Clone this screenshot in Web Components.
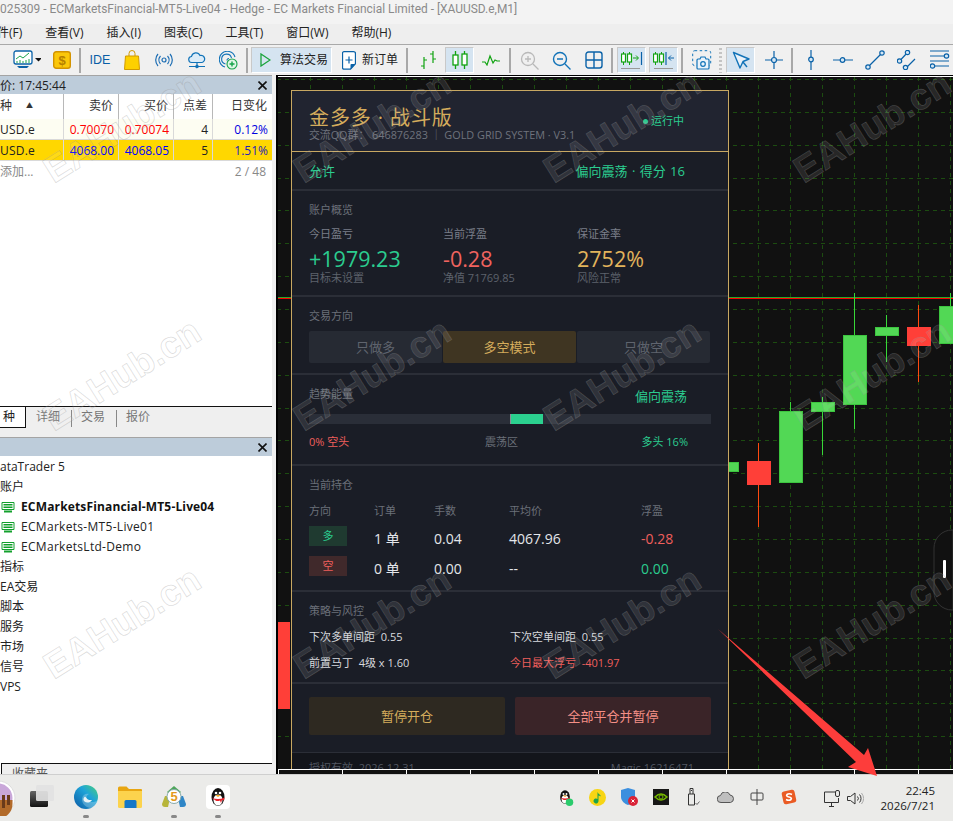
<!DOCTYPE html>
<html lang="zh">
<head>
<meta charset="utf-8">
<title>MT5</title>
<style>
  html, body { margin: 0; padding: 0; height: 100%; overflow: hidden; background: #f0f0f0; }
  body { font: 12px/16px "Open Sans", "Noto Sans CJK SC", sans-serif; color: #222; }
  svg { display: block; }
</style>
</head>
<body>
<mt-app>
  <mt-titlebar slot="top">025309 - ECMarketsFinancial-MT5-Live04 - Hedge - EC Markets Financial Limited - [XAUUSD.e,M1]</mt-titlebar>
  <mt-menubar slot="top"></mt-menubar>
  <mt-toolbar slot="top">
    <tool-item w="46"><svg width="36" height="22" viewBox="0 0 36 22"><rect x="9" y="2" width="18" height="13" rx="2" fill="#fff" stroke="#0a62a8" stroke-width="1.3"/><path d="M11 10l4-3 3 2 6-5" fill="none" stroke="#19a34a"/><path d="M12 14v-2M15 14v-3M18 14v-2M21 14v-3M24 14v-4" stroke="#19a34a"/><path d="M12 17h12l-2 2h-8z" fill="#0a62a8"/><path d="M30 9h7l-3.500 3.500z" fill="#111"/></svg></tool-item>
    <tool-item w="32"><svg width="18" height="18" viewBox="0 0 18 18"><rect x=".7" y=".7" width="16.600" height="16.600" rx="2.500" fill="#fbc70a" stroke="#d39300" stroke-width="1.400"/><text x="9" y="14" text-anchor="middle" font-family="Liberation Sans" font-weight="700" font-size="13" fill="#b67f00">$</text></svg></tool-item>
    <tool-sep></tool-sep>
    <tool-item w="36" style="color:#0a5ea6;font-size:12.500px;font-family:'Liberation Sans'">IDE</tool-item>
    <tool-item w="28"><svg width="16" height="20" viewBox="0 0 16 20"><path d="M5 7V3.500a3 3 0 016 0V7" fill="none" stroke="#d19a00"/><path d="M1.500 6h13l1 13.500H.5z" fill="#fdd000" stroke="#d19a00"/></svg></tool-item>
    <tool-item w="36"><svg width="18" height="14" viewBox="0 0 18 14" fill="none" stroke="#1c6db3" stroke-width="1.200"><circle cx="9" cy="7" r="2"/><path d="M5.500 3a6 6 0 000 8M12.500 3a6 6 0 010 8M3 1a9 9 0 000 12M15 1a9 9 0 010 12"/></svg></tool-item>
    <tool-item w="30"><svg width="18" height="17" viewBox="0 0 18 17" fill="none" stroke="#1273b8" stroke-width="1.200"><path d="M4 10.500a3 3 0 01-.5-6 4.500 4.500 0 018.500-1 3.500 3.500 0 012 7z" fill="#dcecf8"/><path d="M9 10.500v4M1 14.500h16"/><circle cx="9" cy="14.500" r="1.200" fill="#1273b8"/></svg></tool-item>
    <tool-item w="33"><svg width="19" height="19" viewBox="0 0 19 19" fill="none" stroke="#1273b8" stroke-width="1.100"><path d="M6 16A8 8 0 1116 6"/><path d="M6.500 13a5 5 0 116-6"/><path d="M8 9.500a2 2 0 012-2"/><circle cx="13" cy="13" r="5" fill="#dff6e6" stroke="#16a34a"/><path d="M13 10.500v5M10.500 13h5" stroke="#16a34a" stroke-width="1.400"/></svg></tool-item>
    <tool-sep style="margin-right:3px"></tool-sep>
    <tool-item w="81" active style="font-size:12px;justify-content:flex-start;padding-left:8px;gap:9px"><svg width="11" height="14" viewBox="0 0 11 14"><path d="M1 1l9 6-9 6z" fill="none" stroke="#1aa33b" stroke-width="1.300"/></svg><span>算法交易</span></tool-item>
    <tool-item w="73" style="font-size:12px;gap:6px;justify-content:flex-start;padding-left:10px"><svg width="14" height="19" viewBox="0 0 14 19"><path d="M2 .7h9.500a2 2 0 012 2v10l-5 5.500H2a1.500 1.500 0 01-1.500-1.500V2.200A1.500 1.500 0 012 .7z" fill="#fff" stroke="#0a62a8" stroke-width="1.300"/><path d="M7 5.500v7M3.500 9h7" stroke="#0a62a8" stroke-width="1.200"/><path d="M8.500 18.500l5-5.500H9.500a1 1 0 00-1 1z" fill="#0a62a8"/></svg><span>新订单</span></tool-item>
    <tool-sep></tool-sep>
    <tool-item w="32" style="margin-left:3px"><svg width="17" height="20" viewBox="0 0 17 20" fill="none" stroke="#11a311" stroke-width="1.200"><path d="M4 7v12M1 16h3M4 10h3M13 1v12M10 4h3M13 9h3"/></svg></tool-item>
    <tool-item w="29" style="margin-left:1px" active><svg width="16" height="20" viewBox="0 0 16 20" fill="none" stroke="#11a311" stroke-width="1.300"><path d="M3.500 1v18M12.500 1v18"/><rect x="1" y="5" width="5" height="10" fill="#fff"/><rect x="10" y="4" width="5" height="11" fill="#fff"/></svg></tool-item>
    <tool-item w="33"><svg width="18" height="12" viewBox="0 0 18 12" fill="none" stroke="#11a311" stroke-width="1.200"><path d="M0 8h3l2 3 3-9 3 7 2-3 2 1h3"/></svg></tool-item>
    <tool-sep style="margin-left:2px"></tool-sep>
    <tool-item w="32" style="margin-left:1px"><svg width="19" height="19" viewBox="0 0 19 19" fill="none" stroke="#b9b9b9" stroke-width="1.300"><circle cx="8" cy="8" r="6.500"/><path d="M8 5v6M5 8h6M13 13l5.500 5.500"/></svg></tool-item>
    <tool-item w="33"><svg width="19" height="19" viewBox="0 0 19 19" fill="none" stroke="#1273b8" stroke-width="1.400"><circle cx="8" cy="8" r="6.500"/><path d="M5 8h6M13 13l5.500 5.500"/></svg></tool-item>
    <tool-item w="32"><svg width="18" height="18" viewBox="0 0 18 18" fill="none" stroke="#0a62a8" stroke-width="1.400"><rect x="1" y="1" width="16" height="16" rx="2.500"/><path d="M9 1v16M1 9h16"/></svg></tool-item>
    <tool-sep style="margin-right:4px"></tool-sep>
    <tool-item w="29" active><svg width="22" height="20" viewBox="0 0 22 20" fill="none"><path d="M2.500 2v13M8.500 2v13" stroke="#11a311"/><rect x=".5" y="4" width="4" height="8" fill="#fff" stroke="#11a311" stroke-width="1.200"/><rect x="6.500" y="4" width="4" height="8" fill="#fff" stroke="#11a311" stroke-width="1.200"/><path d="M12 8h5M15 5.500L17.500 8 15 10.500" stroke="#11a311"/><path d="M20.500 2v13" stroke="#0a62a8" stroke-width="1.200"/><path d="M0 18.500h19" stroke="#999"/></svg></tool-item>
    <tool-item w="29" style="margin-left:3px" active><svg width="22" height="20" viewBox="0 0 22 20" fill="none"><path d="M2.500 2v13M8.500 2v13" stroke="#11a311"/><rect x=".5" y="4" width="4" height="8" fill="#fff" stroke="#11a311" stroke-width="1.200"/><rect x="6.500" y="4" width="4" height="8" fill="#fff" stroke="#11a311" stroke-width="1.200"/><path d="M13 2v13" stroke="#0a62a8" stroke-width="1.200"/><path d="M15.500 8H21M18 5.500L15.500 8 18 10.500" stroke="#0a62a8"/><path d="M1 18.500h19" stroke="#999"/></svg></tool-item>
    <tool-sep style="margin-left:3px"></tool-sep>
    <tool-item w="32" style="margin-left:2px"><svg width="20" height="20" viewBox="0 0 20 20" fill="none"><rect x=".7" y=".7" width="18" height="15" rx="2" stroke="#1273b8" stroke-dasharray="2.500 2.500"/><path d="M6 9h2l1-2h4l1 2h2a1 1 0 011 1v8a1 1 0 01-1 1H6a1 1 0 01-1-1v-8a1 1 0 011-1z" fill="#eaf3fa" stroke="#1273b8" stroke-width="1.200"/><circle cx="11" cy="14" r="2.300" stroke="#1273b8" stroke-width="1.200"/></svg></tool-item>
    <tool-grip></tool-grip>
    <tool-item w="29" active><svg width="18" height="19" viewBox="0 0 18 19" fill="none"><path d="M1.500 1.500L17 8l-6 2.500L8 17z" fill="#e9f2fa" stroke="#1273b8" stroke-width="1.400" stroke-linejoin="round"/><path d="M11 11l4 5" stroke="#1273b8" stroke-width="1.400"/></svg></tool-item>
    <tool-item w="32" style="margin-left:3px"><svg width="18" height="18" viewBox="0 0 18 18" fill="none" stroke="#0a62a8" stroke-width="1.200"><path d="M9 0v6M9 12v6M0 9h6M12 9h6"/><circle cx="9" cy="9" r="2.500" fill="#d7e7f4"/></svg></tool-item>
    <tool-sep></tool-sep>
    <tool-item w="32" style="margin-left:1px"><svg width="6" height="20" viewBox="0 0 6 20" fill="none" stroke="#0a62a8" stroke-width="1.200"><path d="M3 0v7M3 12v8"/><circle cx="3" cy="9.500" r="2.300" fill="#d7e7f4"/></svg></tool-item>
    <tool-item w="32"><svg width="20" height="6" viewBox="0 0 20 6" fill="none" stroke="#0a62a8" stroke-width="1.200"><path d="M0 3h7M12 3h8"/><circle cx="9.500" cy="3" r="2.300" fill="#d7e7f4"/></svg></tool-item>
    <tool-item w="32"><svg width="20" height="20" viewBox="0 0 20 20" fill="none" stroke="#0a62a8" stroke-width="1.200"><path d="M4 16L16 4"/><circle cx="3" cy="17" r="2.200" fill="#d7e7f4"/><circle cx="17" cy="3" r="2.200" fill="#d7e7f4"/></svg></tool-item>
    <tool-item w="32"><svg width="20" height="20" viewBox="0 0 20 20" fill="none" stroke="#0a62a8" stroke-width="1.200"><path d="M3.500 10L10 3M10 17l8-8"/><circle cx="2.500" cy="11" r="2.200" fill="#d7e7f4"/><circle cx="10.500" cy="2.500" r="2.200" fill="#d7e7f4"/><circle cx="8.500" cy="17.500" r="2.200" fill="#d7e7f4"/></svg></tool-item>
    <tool-item w="34"><svg width="20" height="20" viewBox="0 0 20 20" fill="none" stroke="#0a62a8" stroke-width="1.200"><path d="M0 1h19M0 6h14M0 11h19M5 16h14"/><circle cx="16.500" cy="6" r="2.200" fill="#d7e7f4"/><circle cx="2.500" cy="16" r="2.200" fill="#d7e7f4"/></svg></tool-item>
  </mt-toolbar>

  <mt-sidebar slot="side"></mt-sidebar>
  <mt-chart slot="main"><ea-panel></ea-panel></mt-chart>
  <mt-taskbar slot="bottom"></mt-taskbar>
</mt-app>

<script>
class MtApp extends HTMLElement {
  constructor() {
    super();
    this.attachShadow({ mode: 'open' }).innerHTML = `
      <style>
        :host { display: flex; flex-direction: column; width: 953px; height: 821px; position: relative; overflow: hidden; }
        .mid { flex: 1; display: flex; min-height: 0; }
        .over { position: absolute; inset: 0 0 47px 0; pointer-events: none; overflow: hidden; }
        .arrow { position: absolute; left: 0; top: 0; pointer-events: none; }
      </style>
      <slot name="top"></slot>
      <div class="mid"><slot name="side"></slot><slot name="main"></slot></div>
      <slot name="bottom"></slot>
      <div class="over"><wm-overlay></wm-overlay></div>
      <svg class="arrow" width="953" height="821"><path d="M718 629L864 755 868 748 877 776 848 767 856 762z" fill="#fd3d3b"/></svg>`;
  }
}

class MtTitlebar extends HTMLElement {
  constructor() {
    super();
    this.attachShadow({ mode: 'open' }).innerHTML = `
      <style>
        :host { display: block; height: 24px; background: #f3f3f3; color: #8a8a8a; font: 11.950px/18px Roboto, sans-serif; white-space: nowrap; overflow: hidden; }
      </style><slot></slot>`;
  }
}

class MtMenubar extends HTMLElement {
  constructor() {
    super();
    const items = ['件(F)', '查看(V)', '插入(I)', '图表(C)', '工具(T)', '窗口(W)', '帮助(H)'];
    this.attachShadow({ mode: 'open' }).innerHTML = `
      <style>
        :host { display: flex; gap: 23px; height: 20px; margin-left: -3px; background: #eeeeee; color: #222; font-size: 12px; line-height: 18px; white-space: nowrap; }
      </style>${items.map(m => `<span>${m}</span>`).join('')}`;
  }
}

class MtToolbar extends HTMLElement {
  constructor() {
    super();
    this.attachShadow({ mode: 'open' }).innerHTML = `
      <style>
        :host { display: flex; align-items: center; height: 31px; box-sizing: border-box; background: #f0f0f0; border-top: 1px solid #a9a9a9; white-space: nowrap; overflow: hidden; }
      </style><slot></slot>`;
  }
}

class ToolItem extends HTMLElement {
  constructor() {
    super();
    this.attachShadow({ mode: 'open' }).innerHTML = `
      <style>
        :host { display: flex; align-items: center; justify-content: center; height: 26px; box-sizing: border-box; flex: none; color: #222; }
        :host([active]) { background: #d5e4f1; border: 1px solid #c9c9c9; border-right-color: #fff; border-bottom-color: #fff; }
      </style><slot></slot>`;
  }
  connectedCallback() {
    this.style.width = this.getAttribute('w') + 'px';
  }
}

class ToolSep extends HTMLElement {
  constructor() {
    super();
    this.attachShadow({ mode: 'open' }).innerHTML = `
      <style>:host { display: block; flex: none; width: 2px; height: 25px; margin: 0 1px; background: #a8a8a8; }</style>`;
  }
}

class ToolGrip extends HTMLElement {
  constructor() {
    super();
    this.attachShadow({ mode: 'open' }).innerHTML = `
      <style>:host { display: block; flex: none; width: 3px; height: 25px; margin: 0 4px 0 1px;
        background: repeating-linear-gradient(#c4c4c4 0 2px, transparent 2px 4px); }</style>`;
  }
}

class PanelHead extends HTMLElement {
  constructor() {
    super();
    this.attachShadow({ mode: 'open' }).innerHTML = `
      <style>
        :host { display: flex; flex: none; align-items: center; justify-content: space-between; height: 19px; box-sizing: border-box; padding-right: 5px;
          background: #bdccda; border-top: 1px solid #a4a4a4; color: #222; font-size: 12px; white-space: nowrap; }
      </style>
      <span><slot></slot></span>
      <svg width="9" height="9" viewBox="0 0 9 9" style="display:block"><path d="M.5.5l8 8M8.500.5l-8 8" stroke="#111" stroke-width="1.600"/></svg>`;
  }
}

class MarketWatch extends HTMLElement {
  constructor() {
    super();
    const row = (sym, bid, ask, sp, chg, cls) => `
      <div class="row ${cls}"><span class="l">${sym}</span><span class="p">${bid}</span><span class="p">${ask}</span><span class="k">${sp}</span><span class="c">${chg}</span></div>`;
    this.attachShadow({ mode: 'open' }).innerHTML = `
      <style>
        :host { display: block; background: #fff; flex: none; height: 331px; font-size: 12px; line-height: 21px; }
        .row { display: grid; grid-template-columns: 64px 55px 55px 39px 59px; height: 21px; box-sizing: border-box; border-bottom: 1px solid #d9d9d9; }
        .row > span { padding-right: 4px; text-align: right; white-space: nowrap; border-right: 1px solid #d9d9d9; }
        .row > span:last-child { border-right: 0; }
        .row > .l { text-align: left; padding: 0; letter-spacing: .2px; }
        .head { height: 25px; line-height: 23px; border-bottom: 0; color: #333; }
        .head > span { border-right: 1px solid #b8b8b8; padding-right: 5px; }
        .head .l { display: flex; gap: 14px; padding: 0; letter-spacing: 0; }
        .head i { font-style: normal; font-size: 7px; }
        .a { background: #fdfdf2; }
        .a .p { color: #ff0000; } .a .c { color: #0000e0; }
        .b { background: #ffd700; }
        .b .p { color: #0000ff; } .b .c { color: #2222bb; }
        .foot { display: flex; justify-content: space-between; padding: 1px 6px 0 0; color: #888; line-height: 20px; }
      </style>
      <panel-head>价: 17:45:44</panel-head>
      <div class="row head"><span class="l">种<i>▲</i></span><span>卖价</span><span>买价</span><span>点差</span><span>日变化</span></div>
      ${row('USD.e', '0.70070', '0.70074', '4', '0.12%', 'a')}
      ${row('USD.e', '4068.00', '4068.05', '5', '1.51%', 'b')}
      <div class="foot"><span>添加...</span><span>2 / 48</span></div>`;
  }
}

class MwTabs extends HTMLElement {
  constructor() {
    super();
    this.attachShadow({ mode: 'open' }).innerHTML = `
      <style>
        :host { display: flex; flex: none; height: 31px; box-sizing: border-box; background: #efefef; border-top: 1px solid #111; color: #777; font-size: 12px; line-height: 20px; }
        .on { width: 26px; height: 21px; box-sizing: border-box; background: #fff; color: #222; border: solid #111; border-width: 0 1px 1px 0; padding-left: 3px; overflow: hidden; }
        span { padding: 0 11px; }
        .s { height: 17px; border-right: 1px solid #888; padding: 0; margin-top: 3px; }
      </style>
      <div class="on">种</div><span style="padding-left:10px">详细</span><i class="s"></i><span style="padding-left:9px">交易</span><i class="s"></i><span style="padding-left:9px">报价</span>`;
  }
}

class NavTree extends HTMLElement {
  constructor() {
    super();
    const icon = `<svg width="14" height="11" viewBox="0 0 14 11" style="display:block"><path d="M1 .5h12v7H1z" fill="#fff" stroke="#12a02c"/><path d="M2.500 2.500h9M2.500 4h9M2.500 5.500h9" stroke="#12a02c"/><path d="M3 9.500h8" stroke="#12a02c" stroke-width="2"/></svg>`;
    const srv = (t, b) => `<div class="srv ${b ? 'b' : ''}">${icon}<span>${t}</span></div>`;
    this.attachShadow({ mode: 'open' }).innerHTML = `
      <style>
        :host { display: block; flex: 1; min-height: 0; background: #fff; padding-top: 1px; font-size: 12px; line-height: 20px; color: #222; white-space: nowrap; }
        .srv { display: flex; align-items: center; gap: 6px; padding-left: 1px; letter-spacing: .3px; }
        .b { font-weight: 700; color: #111; letter-spacing: .15px; }
      </style>
      <div>ataTrader 5</div><div>账户</div>
      ${srv('ECMarketsFinancial-MT5-Live04', true)}${srv('ECMarkets-MT5-Live01')}${srv('ECMarketsLtd-Demo')}
      <div>指标</div><div>EA交易</div><div>脚本</div><div>服务</div><div>市场</div><div>信号</div><div>VPS</div>`;
  }
}

class MtSidebar extends HTMLElement {
  constructor() {
    super();
    this.attachShadow({ mode: 'open' }).innerHTML = `
      <style>
        :host { display: flex; flex-direction: column; flex: none; width: 272px; margin-right: 4px; background: #fff; }
        .fav { flex: none; height: 11px; box-sizing: border-box; margin-left: 1px; border: solid #111; border-width: 1px 0 0 1px; padding-left: 10px; color: #555; font-size: 12px; line-height: 19px; overflow: hidden; background: #efefef; }
      </style>
      <market-watch></market-watch>
      <mw-tabs></mw-tabs>
      <panel-head></panel-head>
      <nav-tree></nav-tree>
      <div class="fav">收藏夹</div>`;
  }
}

class MtChart extends HTMLElement {
  constructor() {
    super();
    // x, body top, body bottom, wick top, wick bottom, up
    const candles = [
      [715, 462, 471, 462, 471, 1], [747, 461, 484, 443, 527, 0], [779, 411, 482, 402, 482, 1],
      [811, 402, 411, 397, 455, 1], [843, 335, 404, 293, 429, 1], [875, 327, 335, 315, 362, 1],
      [907, 327, 345, 305, 382, 0], [939, 306, 343, 293, 343, 1]
    ];
    let grid = '';
    for (let x = 950; x > 278; x -= 32) grid += `M${x + .5} 77V769`;
    for (let i = 0; i < 21; i++) grid += `M277 ${Math.round(79 + i * 32.86) + .5}H953`;
    const bars = candles.map(([x, t, b, wt, wb, up]) => {
      const fill = up ? '#52d855' : '#ff3f38', edge = up ? '#3cc53f' : '#ff3f38', wick = up ? '#38d838' : '#ff4a10';
      return `<path d="M${x + 11.500} ${wt}V${wb}" stroke="${wick}"/><rect x="${x + .5}" y="${t + .5}" width="23" height="${b - t}" fill="${fill}" stroke="${edge}"/>`;
    }).join('');
    this.attachShadow({ mode: 'open' }).innerHTML = `
      <style>
        :host { display: block; position: relative; flex: 1; min-width: 0; background: #111; overflow: hidden;
          border-top: 1px solid #000; border-left: 2px solid #000; box-shadow: inset 0 1px 0 #fff; }
        svg { position: absolute; left: -2px; top: -1px; }
        ::slotted(ea-panel) { position: absolute; left: 13px; top: 14px; }
        .axis { position: absolute; left: -2px; right: 0; bottom: 0; height: 5px; box-sizing: border-box; background: repeating-linear-gradient(90deg, #111 0 2px, #fff 2px 3px, #111 3px 64px); border-top: 1px solid #fff; }
      </style>
      <svg width="677" height="699" viewBox="276 75 677 699">
        <path d="${grid}" stroke="#1c4c10" stroke-dasharray="4 4" fill="none"/>
        <path d="M277 297.500H953" stroke="#2aa82a"/><path d="M277 298.500H953" stroke="#ff0000"/>
        <rect x="277" y="622" width="13" height="87" fill="#ff3f38"/>
        ${bars}
        <path d="M953 530h-1a18 18 0 00-18 18v44a18 18 0 0018 18h1z" fill="#111" stroke="#333"/>
        <rect x="943" y="560" width="3" height="18" rx="1" fill="#fff"/>
      </svg>
      <slot></slot>
      <div class="axis"></div>`;
  }
}

class EaSection extends HTMLElement {
  constructor() {
    super();
    this.attachShadow({ mode: 'open' }).innerHTML = `
      <style>
        :host { display: block; box-sizing: border-box; padding: 11px 17px 0; border-bottom: 2px solid #2b2e37; }
        .t { height: 16px; line-height: 16px; font-size: 11px; color: #6b7079; }
      </style>
      <div class="t"><slot name="title"></slot></div>
      <slot></slot>`;
  }
  connectedCallback() {
    this.style.height = this.getAttribute('h') + 'px';
  }
}

class EaPanel extends HTMLElement {
  constructor() {
    super();
    const stat = (l, v, s, c) => `<div class="stat"><div class="sl">${l}</div><div class="sv" style="color:${c}">${v}</div><div class="ss">${s}</div></div>`;
    this.attachShadow({ mode: 'open' }).innerHTML = `
      <style>
        :host { display: block; box-sizing: border-box; width: 438px; border: 1px solid #c8a862; border-bottom: 0; background: #1a1d26; color: #d8dade; font-size: 11px; line-height: 16px; white-space: nowrap; }
        .head { position: relative; height: 61px; box-sizing: border-box; padding: 14px 17px 0; background: #212430; border-bottom: 1px solid #c8a862; }
        .title { font-size: 20px; line-height: 26px; color: #d4ac5c; letter-spacing: .9px; }
        .sub { margin-top: -3px; line-height: 14px; color: #6f737d; font-size: 10.850px; }
        .run { position: absolute; left: 351px; top: 22px; color: #2bcc8f; display: flex; align-items: center; gap: 3px; }
        .run i { width: 5px; height: 5px; border-radius: 50%; background: #2bcc8f; }
        .allow { display: flex; justify-content: space-between; height: 39px; box-sizing: border-box; padding: 11px 43px 0 17px; border-bottom: 2px solid #2b2e37; color: #2bcc8f; font-size: 13px; word-spacing: 1px; }
        .stats { display: grid; grid-template-columns: repeat(3, 134px); margin-top: 8px; }
        .sl { line-height: 16px; color: #7a7f89; }
        .sv { margin-top: 5px; font-size: 21.500px; line-height: 23px; }
        .ss { line-height: 14px; color: #5d626c; margin-top: 1px; }
        .dirs { display: grid; grid-template-columns: repeat(3, 133px); gap: 1px; margin-top: 7px; }
        .dirs span { height: 32px; line-height: 32px; text-align: center; background: #262a33; color: #5f646e; font-size: 13px; border-radius: 2px; }
        .dirs .on { background: #3f3522; color: #d4ac5c; }
        .tr { height: 16px; margin-top: -14px; padding-right: 24px; text-align: right; color: #2bcc8f; font-size: 13px; line-height: 16px; }
        .bar { position: relative; height: 10px; margin-top: 10px; background: #2a2e38; }
        .bar b { position: absolute; left: 201px; top: 0; width: 32px; height: 10px; background: #2bd08f; border-left: 1px solid #8a8e96; }
        .scale { display: grid; grid-template-columns: 1fr 1fr 1fr; margin: 10px 23px 0 0; }
        .scale span:nth-child(2) { text-align: center; color: #6b7079; padding-left: 6px; }
        .scale span:nth-child(3) { text-align: right; color: #2bcc8f; }
        .red { color: #ef5f5c; }
        .pos { display: grid; grid-template-columns: 65px 60px 75px 132px 1fr; grid-template-rows: 16px 27px 30px; align-items: end; margin-top: 10px; font-size: 14px; line-height: 14px; color: #e4e6ea; }
        .pos .h { font-size: 11px; color: #6b7079; line-height: 16px; }
        .pos .tag { width: 38px; height: 20px; line-height: 20px; text-align: center; font-size: 11px; }
        .long { background: #1f3a30; color: #2bcc8f; }
        .short { background: #40292b; color: #ef5f5c; }
        .grn { color: #2bcc8f; }
        .grid2 { display: grid; grid-template-columns: 201px 201px; row-gap: 10px; margin-top: 10px; line-height: 16px; }
        .acts { display: flex; gap: 10px; height: 69px; box-sizing: border-box; padding: 13px 17px 0; border-bottom: 1px solid #2b2e37; }
        .acts span { flex: 1; height: 38px; line-height: 38px; text-align: center; font-size: 13px; border-radius: 2px; }
        .foot { display: flex; justify-content: space-between; height: 40px; padding: 7px 34px 0 17px; background: #13151b; color: #525762; }
      </style>
      <div class="head">
        <div class="title">金多多 · 战斗版</div>
        <div class="sub">交流QQ群： 646876283 │ GOLD GRID SYSTEM · V3.1</div>
        <div class="run"><i></i>运行中</div>
      </div>
      <div class="allow"><span>允许</span><span>偏向震荡 · 得分 16</span></div>
      <ea-section h="106"><span slot="title">账户概览</span>
        <div class="stats">
          ${stat('今日盈亏', '+1979.23', '目标未设置', '#2bcc8f')}
          ${stat('当前浮盈', '-0.28', '净值 71769.85', '#f0635f')}
          ${stat('保证金率', '2752%', '风险正常', '#e2b45c')}
        </div>
      </ea-section>
      <ea-section h="78"><span slot="title">交易方向</span>
        <div class="dirs"><span>只做多</span><span class="on">多空模式</span><span>只做空</span></div>
      </ea-section>
      <ea-section h="91"><span slot="title">趋势能量</span>
        <div class="tr">偏向震荡</div>
        <div class="bar"><b></b></div>
        <div class="scale"><span class="red">0% 空头</span><span>震荡区</span><span>多头 16%</span></div>
      </ea-section>
      <ea-section h="126"><span slot="title">当前持仓</span>
        <div class="pos">
          <span class="h">方向</span><span class="h">订单</span><span class="h">手数</span><span class="h">平均价</span><span class="h">浮盈</span>
          <span class="tag long">多</span><span>1 单</span><span>0.04</span><span>4067.96</span><span class="red">-0.28</span>
          <span class="tag short">空</span><span>0 单</span><span>0.00</span><span>--</span><span class="grn">0.00</span>
        </div>
      </ea-section>
      <ea-section h="92"><span slot="title">策略与风控</span>
        <div class="grid2">
          <span>下次多单间距&nbsp; 0.55</span><span>下次空单间距&nbsp; 0.55</span>
          <span>前置马丁&nbsp; 4级 x 1.60</span><span class="red">今日最大浮亏&nbsp; -401.97</span>
        </div>
      </ea-section>
      <div class="acts"><span style="background:#2e2921;color:#d4ac5c">暂停开仓</span><span style="background:#3a2428;color:#f58f86">全部平仓并暂停</span></div>
      <div class="foot"><span>授权有效&nbsp; 2026.12.31</span><span>Magic 16216471</span></div>`;
  }
}

class WmOverlay extends HTMLElement {
  constructor() {
    super();
    this.attachShadow({ mode: 'open' }).innerHTML = `
      <style>
        :host { display: grid; grid-template-columns: repeat(4, 250px); grid-auto-rows: 248px; place-items: center; margin: 3px 0 0 -3px; }
        span { transform: rotate(-32deg); font: 700 37px/44px "Liberation Sans", sans-serif; color: rgba(255,255,255,.09); -webkit-text-stroke: .8px rgba(150,150,150,.32); white-space: nowrap; }
      </style>
      ${Array(12).fill('<span>EAHub.cn</span>').join('')}`;
  }
}

class MtTaskbar extends HTMLElement {
  constructor() {
    super();
    const penguin = `<ellipse cx="12" cy="12" rx="6.500" ry="9" fill="#111"/><ellipse cx="12" cy="15" rx="4.500" ry="5.500" fill="#fff"/><circle cx="10" cy="8" r="1.300" fill="#fff"/><circle cx="14" cy="8" r="1.300" fill="#fff"/><path d="M9 10h6l-3 2z" fill="#f5a623"/><path d="M5.500 12.500q6.500 3 13 0l-.5 3-2-.5-1 3-1-2.500q-2.500 1-4.500 0z" fill="#e8222a"/>`;
    const app = (dot, svg) => `<div class="app ${dot ? 'dot' : ''}">${svg}</div>`;
    const tray = svg => `<div class="tray">${svg}</div>`;
    this.attachShadow({ mode: 'open' }).innerHTML = `
      <style>
        :host { display: flex; align-items: center; flex: none; height: 47px; box-sizing: border-box; background: #ebebe9; border-top: 1px solid #cfcfcf; overflow: hidden; }
        .app { position: relative; flex: none; width: 44px; height: 46px; display: flex; align-items: center; justify-content: center; }
        .app svg { margin-top: -2px; display: block; }
        .app.dot::after { content: ''; position: absolute; left: 19px; top: 40px; width: 6px; height: 3px; border-radius: 2px; background: #888; }
        .apps { display: flex; margin-left: -24px; }
        .tray { flex: none; width: 32px; display: flex; justify-content: center; }
        .tray svg { display: block; margin-top: -2px; }
        .sp { flex: 1; }
        .clock { flex: none; width: 88px; box-sizing: border-box; padding-right: 18px; text-align: right; color: #222; font-size: 11.500px; line-height: 15px; white-space: nowrap; margin-top: -1px; }
      </style>
      <div class="apps">
        ${app(0, `<svg width="36" height="36" viewBox="0 0 36 36" style="margin:0"><circle cx="18" cy="18" r="17" fill="#fff" stroke="#ddd"/><circle cx="18" cy="18" r="14.500" fill="#c9a7d9"/><path d="M3.500 20h29v4a14.500 14.500 0 01-29 0z" fill="#b26a2a"/><path d="M22 15h3v13h-3zM27 15h3v10h-3z" fill="#6a3a1a"/></svg>`)}
        ${app(0, `<svg width="24" height="24" viewBox="0 0 24 24"><defs><linearGradient id="k1" x1="0" y1="0" x2="0" y2="1"><stop offset="0" stop-color="#666"/><stop offset="1" stop-color="#111"/></linearGradient></defs><rect x="0" y="6" width="18" height="16" rx="1.500" fill="url(#k1)"/><rect x="6" y="0" width="18" height="16" rx="1.500" fill="#e2e2e2" opacity=".92"/></svg>`)}
        ${app(1, `<svg width="24" height="24" viewBox="0 0 24 24"><defs><linearGradient id="e1" x1="0" y1="1" x2="1" y2="0"><stop offset="0" stop-color="#0c59a4"/><stop offset=".6" stop-color="#1fa4d8"/><stop offset="1" stop-color="#4bd277"/></linearGradient></defs><circle cx="12" cy="12" r="12" fill="url(#e1)"/><path d="M24 13.500c0 2.500-3 3.500-5.500 3.500-3 0-6-1.500-6-4.500 0-2 1.500-3 2.500-3.500-3-1-6.500 1-7 4.500-.5 4 3 9 8 9.500 4-.5 8-4 8-9.500z" fill="#fff" opacity=".25"/><path d="M12 12.500c1 1.800 3.500 3 6 2.500-2 3-5.500 3.200-7.500 1.500-1.500-1.300-1.300-3.300 0-4.500.5-.5 1-.5 1.500.5z" fill="#eaf3f6"/></svg>`)}
        ${app(0, `<svg width="24" height="22" viewBox="0 0 24 22"><path d="M0 2a1.500 1.500 0 011.500-1.500h7L11 3h12a1 1 0 011 1v4H0z" fill="#e8a612"/><path d="M0 5h24v15.500a1.500 1.500 0 01-1.500 1.500h-21A1.500 1.500 0 010 20.500z" fill="#fcd34d"/><path d="M8 14h9a1.500 1.500 0 011.500 1.500V22h-12v-6.500A1.500 1.500 0 018 14z" fill="#1577c7"/></svg>`)}
        ${app(1, `<svg width="24" height="24" viewBox="0 0 24 24"><path d="M12 1l7 6-7 6-7-6z" fill="#4ea55b"/><path d="M3 11a5 5 0 015 2l-2 9H3a3 3 0 01-3-3z" fill="#b7b53a"/><path d="M21 11a5 5 0 00-5 2l2 9h3a3 3 0 003-3z" fill="#2f86c7"/><circle cx="12" cy="11.500" r="7" fill="#fff" stroke="#8aa"/><text x="12" y="16" text-anchor="middle" font-family="Liberation Sans" font-weight="700" font-size="13" fill="#e39a1c">5</text></svg>`)}
        ${app(1, `<svg width="24" height="24" viewBox="0 0 24 24"><rect width="24" height="24" rx="4" fill="#fff"/>${penguin}</svg>`)}
      </div>
      <div class="sp"></div>
      ${tray(`<svg width="18" height="18" viewBox="0 0 24 24">${penguin}<circle cx="18" cy="19" r="5" fill="#2bcb6c"/></svg>`)}
      ${tray(`<svg width="17" height="17" viewBox="0 0 17 17"><circle cx="8.500" cy="8.500" r="8.500" fill="#f7d514"/><path d="M8.500 3c.5 2 3 2.500 3.500 4.500-1-1-2.500-1-2.500-1V12a2.500 2.500 0 11-1-2z" fill="#1aa34a"/></svg>`)}
      ${tray(`<svg width="17" height="18" viewBox="0 0 17 18"><path d="M0 2l7-2 7 2v7c0 4-4 7-7 8-3-1-7-4-7-8z" fill="#3b8fdf"/><circle cx="12" cy="13" r="5" fill="#d92338"/><path d="M10.500 11.500l3 3M13.500 11.500l-3 3" stroke="#fff"/></svg>`)}
      ${tray(`<svg width="16" height="16" viewBox="0 0 16 16"><rect width="16" height="16" fill="#171717"/><path d="M2 8q6-6 12 0-6 6-12 0z" fill="none" stroke="#76b900" stroke-width="1.500"/><circle cx="8" cy="8" r="2" fill="none" stroke="#76b900"/></svg>`)}
      ${tray(`<svg width="14" height="18" viewBox="0 0 14 18" fill="none" stroke="#333"><path d="M2.500 6h6v11h-6zM4 6V.5h3V6M5 2.500h1"/><path d="M9.500 15l1.500 1.500 2.500-3" stroke="#666"/></svg>`)}
      ${tray(`<svg width="17" height="11" viewBox="0 0 17 11"><path d="M4 10.500a3.500 3.500 0 01-.5-7 5 5 0 019.500-.5 3.800 3.800 0 01.500 7.500z" fill="#bfbfbf" stroke="#555"/></svg>`)}
      ${tray(`<svg width="14" height="16" viewBox="0 0 14 16" fill="none" stroke="#444"><rect x="1" y="4" width="12" height="7" rx="1"/><path d="M7 0v16"/></svg>`)}
      ${tray(`<svg width="16" height="16" viewBox="0 0 16 16"><rect x="1.500" y="1.500" width="13" height="13" rx="2.500" fill="#ea5b24" transform="rotate(-12 8 8)"/><path d="M11 5.500q-3-1.500-5 0c-1 1 0 2.200 2 2.500s3 1.500 2 2.500q-2 1.500-5 0" fill="none" stroke="#fff" stroke-width="1.600"/></svg>`)}
      <div style="flex:none;width:14px"></div>
      <div style="flex:none;width:26px;display:flex;justify-content:center"><svg width="16" height="17" viewBox="0 0 16 17" fill="none" stroke="#333" style="display:block"><path d="M11 2H.5v10.500h14V8"/><path d="M5 16.500h5M7.500 12.500v4"/><rect x="11.500" y=".5" width="4" height="6" rx="1.500"/></svg></div>
      <div style="flex:none;width:20px;display:flex;justify-content:center"><svg width="17" height="13" viewBox="0 0 17 13" fill="none" stroke="#333" style="display:block"><path d="M.5 4.500h3L8 1v11L3.500 8.500h-3z"/><path d="M10.500 4.500a3 3 0 010 4M12.500 2.500a6 6 0 010 8"/><path d="M14.500 1a9 9 0 010 11" stroke="#aaa"/></svg></div>
      <div class="clock">22:45<br>2026/7/21</div>`;
  }
}

customElements.define('mt-app', MtApp);
customElements.define('mt-titlebar', MtTitlebar);
customElements.define('mt-menubar', MtMenubar);
customElements.define('mt-toolbar', MtToolbar);
customElements.define('tool-item', ToolItem);
customElements.define('tool-sep', ToolSep);
customElements.define('tool-grip', ToolGrip);
customElements.define('panel-head', PanelHead);
customElements.define('market-watch', MarketWatch);
customElements.define('mw-tabs', MwTabs);
customElements.define('nav-tree', NavTree);
customElements.define('mt-sidebar', MtSidebar);
customElements.define('mt-chart', MtChart);
customElements.define('ea-section', EaSection);
customElements.define('ea-panel', EaPanel);
customElements.define('wm-overlay', WmOverlay);
customElements.define('mt-taskbar', MtTaskbar);
</script>
</body>
</html>
